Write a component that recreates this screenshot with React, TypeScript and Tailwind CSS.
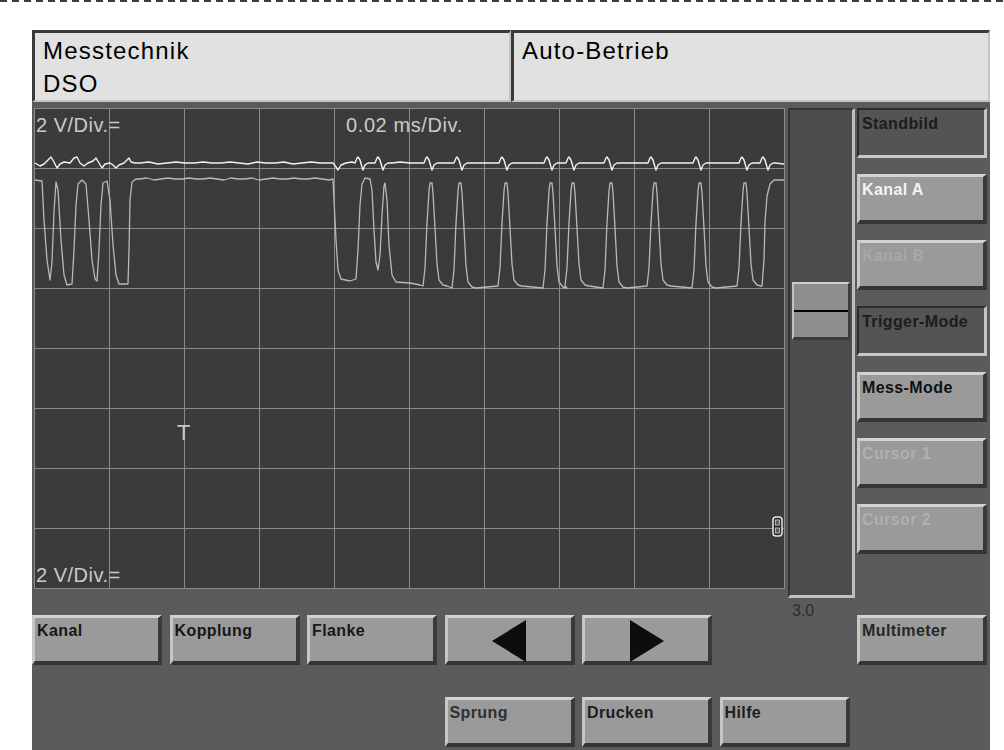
import React from 'react';

// ─── Trace data (absolute page coords, svg viewBox matches scope box) ─────────

type Pt = [number, number];

const toPath = (pts: Pt[]) =>
  pts.map((p, i) => `${i ? 'L' : 'M'}${p[0]} ${p[1]}`).join(' ');

function flat(from: number, to: number, y: number, step = 7): Pt[] {
  const out: Pt[] = [];
  let k = 0;
  for (let x = from; x < to; x += step) {
    out.push([x, y + (k % 3 === 1 ? -1 : k % 5 === 2 ? 1 : 0)]);
    k++;
  }
  return out;
}

function peakUp(x: number, top = 183, bottom = 287): Pt[] {
  return [
    [x - 8, bottom],
    [x - 6, bottom - 18],
    [x - 4, top + 40],
    [x - 2, top + 8],
    [x - 1, top],
    [x + 1, top],
    [x + 2, top + 10],
    [x + 4, top + 45],
    [x + 6, bottom - 22],
    [x + 8, bottom - 6],
    [x + 12, bottom - 1],
    [x + 16, bottom],
  ];
}

const trace2: Pt[] = [
  [35, 180], [42, 181], [44, 220], [47, 260], [50, 280], [52, 262], [54, 212], [56, 182],
  [58, 190], [61, 240], [64, 275], [67, 285], [72, 284], [74, 250], [76, 205], [78, 184],
  [82, 180], [86, 184], [89, 220], [92, 260], [95, 279], [97, 281], [99, 250], [101, 205],
  [103, 183], [107, 181], [110, 200], [113, 245], [116, 275], [119, 284], [128, 284],
  [129, 250], [130, 200], [132, 182], [136, 179],
  ...flat(140, 333, 179),
  [333, 179], [334, 200], [336, 240], [338, 270], [341, 279], [350, 281], [356, 279],
  [358, 250], [360, 205], [362, 184], [365, 178], [370, 179], [372, 190], [374, 230],
  [376, 262], [378, 270], [380, 255], [382, 215], [384, 186], [385, 183], [387, 200],
  [389, 245], [392, 275], [396, 282], [410, 283], [420, 285],
  ...[431, 460, 506, 551, 573, 611, 655, 700, 745].flatMap((x, i) =>
    peakUp(x, 183, i % 2 ? 288 : 286)
  ),
  [762, 286], [764, 260], [765, 222], [767, 196], [770, 184], [774, 180], [784, 180],
];

function spike(x: number, base = 163): Pt[] {
  return [
    [x - 3, base],
    [x - 1, base - 5],
    [x, base - 6],
    [x + 2, base - 3],
    [x + 4, base + 4],
    [x + 5, base + 7],
    [x + 7, base + 2],
    [x + 10, base],
  ];
}

const trace1: Pt[] = [
  [35, 163], [40, 166], [44, 164], [48, 160], [51, 157], [54, 162], [57, 168], [60, 164],
  [64, 162], [70, 163], [74, 158], [77, 157], [80, 163], [84, 166], [88, 163], [93, 161],
  [96, 158], [99, 163], [102, 168], [105, 164], [110, 163], [113, 165], [116, 168],
  [119, 165], [124, 163], [127, 160], [129, 158], [131, 162], [135, 163],
  ...flat(140, 333, 163, 9),
  [333, 163], [336, 167], [338, 170], [341, 165], [346, 163], [352, 162],
  ...spike(358), [368, 163], ...spike(378), [392, 163], [400, 162], [410, 163],
  ...[427, 457, 502, 547, 569, 607, 651, 696, 742].flatMap(x => [
    ...spike(x),
    [x + 16, 163] as Pt,
  ]),
  ...spike(763),
  [775, 163], [784, 164],
];

// ─── Pieces ───────────────────────────────────────────────────────────────────

const FONT = "font-['Liberation_Sans',Arial,sans-serif]";

const RAISED =
  'bg-[#9a9a9a] border-t-[3px] border-l-[3px] border-r-[4px] border-b-[4px] border-t-[#d2d2d2] border-l-[#c6c6c6] border-r-[#393939] border-b-[#353535] pl-[2px] pt-[4px]';
const PRESSED =
  'bg-[#545454] border-t-[2px] border-l-[2px] border-r-[3px] border-b-[3px] border-t-[#2c2c2c] border-l-[#2c2c2c] border-r-[#c4c4c4] border-b-[#c8c8c8] pl-[3px] pt-[5px]';

function Btn({
  label,
  color = 'text-[#171717]',
  pressed = false,
  children,
}: {
  label?: string;
  color?: string;
  pressed?: boolean;
  children?: React.ReactNode;
}) {
  return (
    <div
      className={`h-[50px] w-[130px] text-[16px] font-bold leading-[18px] tracking-[0.4px] ${color} ${
        pressed ? PRESSED : RAISED
      }`}
    >
      {children ?? label}
    </div>
  );
}

function Arrow({ dir }: { dir: 'left' | 'right' }) {
  return (
    <div className={`h-[50px] w-[130px] flex items-center justify-center ${RAISED} !p-0`}>
      <svg width="34" height="42" viewBox="0 0 34 42" className="mt-[2px]">
        {dir === 'left' ? (
          <polygon points="0,21 34,0 34,42" fill="#0d0d0d" />
        ) : (
          <polygon points="0,0 34,21 0,42" fill="#0d0d0d" />
        )}
      </svg>
    </div>
  );
}

function Scope() {
  const vx = Array.from({ length: 11 }, (_, i) => 34.5 + i * 75);
  const hy = Array.from({ length: 9 }, (_, i) => 108.5 + i * 60);
  return (
    <div className="relative w-[751px] h-[481px] bg-[#3b3b3b] shrink-0">
      <svg width="751" height="481" viewBox="34 108 751 481" className="block">
        {vx.map(x => (
          <line key={`v${x}`} x1={x} y1={108} x2={x} y2={589} stroke="#8a8a8a" strokeWidth="1" />
        ))}
        {hy.map(y => (
          <line key={`h${y}`} x1={34} y1={y} x2={785} y2={y} stroke="#8a8a8a" strokeWidth="1" />
        ))}
        <path d={toPath(trace2)} fill="none" stroke="#b9b9b9" strokeWidth="1.3" strokeLinejoin="round" />
        <path d={toPath(trace1)} fill="none" stroke="#f2f2f2" strokeWidth="1.4" strokeLinejoin="round" />
      </svg>

      <span className="absolute left-[2px] top-[7px] text-[20px] leading-none tracking-[0.5px] text-[#cacaca]">
        2 V/Div.=
      </span>
      <span className="absolute left-[312px] top-[7px] text-[20px] leading-none tracking-[0.6px] text-[#cacaca]">
        0.02 ms/Div.
      </span>
      <span className="absolute left-[2px] top-[457px] text-[20px] leading-none tracking-[0.5px] text-[#cacaca]">
        2 V/Div.=
      </span>
      <span className="absolute left-[143px] top-[314px] text-[22px] leading-none text-[#c8c8c8]">T</span>

      {/* trigger level marker */}
      <svg width="11" height="21" viewBox="0 0 11 21" className="absolute left-[738px] top-[408px]">
        <rect x="1" y="1" width="9" height="19" rx="3" fill="#2a2a2a" stroke="#e6e6e6" strokeWidth="1.5" />
        <rect x="3.5" y="4" width="4" height="5" fill="#5a5a5a" stroke="#cfcfcf" strokeWidth="0.8" />
        <rect x="3.5" y="12" width="4" height="5" fill="#5a5a5a" stroke="#cfcfcf" strokeWidth="0.8" />
      </svg>
    </div>
  );
}

function Slider() {
  return (
    <div className="relative ml-[3px] w-[67px] h-[490px] shrink-0">
      <div className="h-full bg-[#4c4c4c] border-t-[2px] border-l-[2px] border-r-[3px] border-b-[3px] border-t-[#353535] border-l-[#353535] border-r-[#bdbdbd] border-b-[#c2c2c2] pt-[172px] px-[2px]">
        <div className="h-[58px] bg-[#8e8e8e] border-t-[2px] border-l-[2px] border-r-[2px] border-b-[3px] border-t-[#cfcfcf] border-l-[#c2c2c2] border-r-[#3a3a3a] border-b-[#3a3a3a] flex flex-col">
          <div className="h-[26px]" />
          <div className="h-[2px] bg-black" />
        </div>
      </div>
      <span className="absolute left-[4px] top-[495px] text-[16px] leading-none text-[#2e2e2e]">3.0</span>
    </div>
  );
}

// ─── Page ─────────────────────────────────────────────────────────────────────

export default function App() {
  return (
    <div className={`w-[1004px] h-[750px] bg-white overflow-hidden ${FONT}`}>
      <div className="h-[2px] bg-[repeating-linear-gradient(90deg,#3c3c3c_0px,#3c3c3c_7px,transparent_7px,transparent_12px)]" />

      <div className="ml-[32px] mt-[28px] w-[958px]">
        {/* Header */}
        <div className="flex">
          {[['Messtechnik', 'DSO'], ['Auto-Betrieb', '']].map(([a, b]) => (
            <div
              key={a}
              className="w-[479px] h-[72px] bg-[#e1e1e1] border-t-[3px] border-l-[3px] border-r-[2px] border-b-[2px] border-t-[#3a3a3a] border-l-[#3a3a3a] border-r-[#c4c4c4] border-b-[#c4c4c4] pl-[8px] pt-[1px] text-[24px] leading-[33px] tracking-[1.2px] text-black"
            >
              <div>{a}</div>
              <div>{b}</div>
            </div>
          ))}
        </div>

        {/* Main panel */}
        <div className="h-[648px] bg-[#5b5b5b] pt-[6px]">
          <div className="flex pl-[2px]">
            <Scope />
            <Slider />
            <div className="ml-[2px] flex flex-col gap-[16px]">
              <Btn label="Standbild" pressed color="text-[#1c1c1c]" />
              <Btn label="Kanal A" color="text-[#f4f4f4]" />
              <Btn label="Kanal B" color="text-[#a8a8a8]" />
              <Btn label="Trigger-Mode" pressed color="text-[#1c1c1c]" />
              <Btn label="Mess-Mode" color="text-[#111111]" />
              <Btn label="Cursor 1" color="text-[#b0b0b0]" />
              <Btn label="Cursor 2" color="text-[#b0b0b0]" />
            </div>
          </div>

          <div className="mt-[17px] grid grid-cols-[repeat(7,130px)] gap-x-[7.5px] gap-y-[32px]">
            <Btn label="Kanal" />
            <Btn label="Kopplung" />
            <Btn label="Flanke" />
            <Arrow dir="left" />
            <Arrow dir="right" />
            <div />
            <Btn label="Multimeter" color="text-[#272727]" />

            <div />
            <div />
            <div />
            <Btn label="Sprung" color="text-[#303030]" />
            <Btn label="Drucken" color="text-[#1e1e1e]" />
            <Btn label="Hilfe" color="text-[#1e1e1e]" />
            <div />
          </div>
        </div>
      </div>
    </div>
  );
}
